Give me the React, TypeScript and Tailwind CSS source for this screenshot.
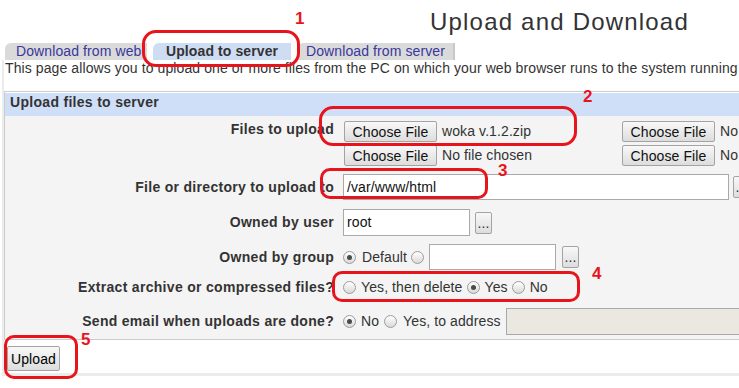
import React from "react";

const btn =
  "border border-[#a3a3a3] rounded-[2px] bg-linear-to-b from-[#f8f8f8] to-[#dddddd] text-[14px] text-[#111] leading-none flex items-center justify-center shrink-0";

function Radio({ checked = false }: { checked?: boolean }) {
  return (
    <span className="w-[13px] h-[13px] rounded-full border border-[#9c9c9c] bg-linear-to-b from-[#ffffff] to-[#d9d9d9] flex items-center justify-center shrink-0">
      {checked && <span className="w-[5px] h-[5px] rounded-full bg-[#4a4a4a]" />}
    </span>
  );
}

function FileInput({ name }: { name: string }) {
  return (
    <div className="flex items-center gap-[5px] ml-[1px]">
      <span className={`${btn} w-[93px] h-[21px]`}>Choose File</span>
      <span className="text-[#333]">{name}</span>
    </div>
  );
}

function Dots() {
  return (
    <span className={`${btn} w-[17px] h-[22px] items-end pb-[3px] text-[11px] text-[#333]`}>
      ...
    </span>
  );
}

function Row({
  label,
  className = "",
  children,
}: {
  label: string;
  className?: string;
  children: React.ReactNode;
}) {
  return (
    <div className={`flex ${className}`}>
      <div className="w-[338px] shrink-0 text-right pr-[9px] font-bold tracking-[0.3px] text-[#333]">{label}</div>
      <div className="flex items-center">{children}</div>
    </div>
  );
}

export default function App() {
  return (
    <div className="relative w-[739px] h-[388px] overflow-hidden bg-white font-['Liberation_Sans',Arial,sans-serif] text-[14px] leading-[17px] tracking-[0.1px] text-[#333] whitespace-nowrap">
      {/* Title */}
      <div className="h-[43px] pt-[8px] pl-[430px]">
        <h1 className="text-[24px] leading-[28px] tracking-[1.2px] text-[#333]">Upload and Download</h1>
      </div>

      {/* Tabs */}
      <div className="flex h-[17px] pl-[5px] gap-[6px]">
        <div className="w-[142px] overflow-hidden rounded-tl-[6px] bg-[#dadada] pl-[11px] text-[#38389c]">
          Download from web
        </div>
        <div className="w-[138px] rounded-tl-[6px] bg-[#cedcf4] pl-[13px] font-bold text-[#333]">
          Upload to server
        </div>
        <div className="w-[158px] rounded-tl-[6px] bg-[#dadada] pl-[9px] text-[#38389c] border-r-2 border-[#c8c8c8]">
          Download from server
        </div>
      </div>

      {/* Tab content */}
      <div className="ml-[2px] border-l-2 border-b-[3px] border-[#ececec] pb-[2px]">
        <p className="pl-[1px] text-[#333]">
          This page allows you to upload one or more files from the PC on which your web browser runs to the system running Webmin.
        </p>

        <div className="mt-[14px] w-[760px] border border-[#cccccc]">
          <div className="mt-[1px] h-[23px] bg-[#cfdff8] pl-[5px] pt-[1px] font-bold tracking-[0.3px] text-[#333]">
            Upload files to server
          </div>
          <div className="bg-[#f4f4f4] pt-[5px] pb-[4px]">
            <Row label="Files to upload">
              <div className="grid grid-cols-[278px_auto] gap-y-[3px]">
                <FileInput name="woka v.1.2.zip" />
                <FileInput name="No file chosen" />
                <FileInput name="No file chosen" />
                <FileInput name="No file chosen" />
              </div>
            </Row>

            <Row label="File or directory to upload to" className="mt-[8px] h-[26px] items-center">
              <div className="w-[386px] h-[26px] border border-[#a9a9a9] bg-white pl-[3px] flex items-center text-[#111]">
                /var/www/html
              </div>
              <span className="ml-[4px]">
                <Dots />
              </span>
            </Row>

            <Row label="Owned by user" className="mt-[9px] h-[27px] items-center">
              <div className="w-[127px] h-[27px] border border-[#a9a9a9] bg-white pl-[3px] flex items-center text-[#111]">
                root
              </div>
              <span className="ml-[5px]">
                <Dots />
              </span>
            </Row>

            <Row label="Owned by group" className="mt-[8px] h-[26px] items-center">
              <Radio checked />
              <span className="ml-[6px]">Default</span>
              <span className="ml-[4px]">
                <Radio />
              </span>
              <div className="ml-[5px] w-[127px] h-[26px] border border-[#a9a9a9] bg-white" />
              <span className="ml-[6px]">
                <Dots />
              </span>
            </Row>

            <Row label="Extract archive or compressed files?" className="mt-[4px] h-[26px] items-center">
              <Radio />
              <span className="ml-[5px]">Yes, then delete</span>
              <span className="ml-[4px]">
                <Radio checked />
              </span>
              <span className="ml-[5px]">Yes</span>
              <span className="ml-[4px]">
                <Radio />
              </span>
              <span className="ml-[5px]">No</span>
            </Row>

            <Row label="Send email when uploads are done?" className="mt-[8px] h-[27px] items-center">
              <Radio checked />
              <span className="ml-[5px]">No</span>
              <span className="ml-[5px]">
                <Radio />
              </span>
              <span className="ml-[6px]">Yes, to address</span>
              <div className="ml-[5px] w-[260px] h-[27px] border border-[#a9a9a9] bg-[#eae8e1]" />
            </Row>
          </div>
        </div>

        <button className={`${btn} ml-[3px] mt-[6px] w-[53px] h-[25px] text-black`}>Upload</button>
      </div>

      {/* Annotations */}
      <div className="absolute left-[142px] top-[30px] w-[158px] h-[37px] rounded-[14px] border-[3px] border-[#e8141c]" />
      <div className="absolute left-[319px] top-[106px] w-[258px] h-[40px] rounded-[14px] border-[3px] border-[#e8141c]" />
      <div className="absolute left-[320px] top-[168px] w-[168px] h-[31px] rounded-[10px] border-[3px] border-[#e8141c]" />
      <div className="absolute left-[332px] top-[271px] w-[248px] h-[31px] rounded-[10px] border-[3px] border-[#e8141c]" />
      <div className="absolute left-[4px] top-[335px] w-[74px] h-[44px] rounded-[10px] border-[3px] border-[#e8141c]" />

      <span className="absolute left-[295px] top-[10px] text-[17px] font-bold text-[#e8141c]">1</span>
      <span className="absolute left-[583px] top-[88px] text-[17px] font-bold text-[#e8141c]">2</span>
      <span className="absolute left-[498px] top-[162px] text-[17px] font-bold text-[#e8141c]">3</span>
      <span className="absolute left-[592px] top-[265px] text-[17px] font-bold text-[#e8141c]">4</span>
      <span className="absolute left-[81px] top-[331px] text-[17px] font-bold text-[#e8141c]">5</span>
    </div>
  );
}
